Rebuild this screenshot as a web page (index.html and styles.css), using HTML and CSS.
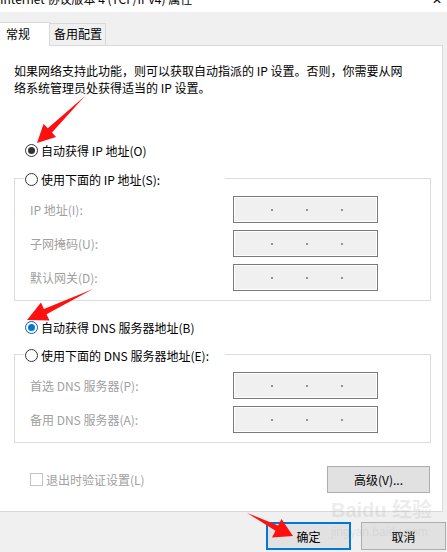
FILE: index.html
```html
<!DOCTYPE html>
<html lang="zh-CN">
<head>
<meta charset="utf-8">
<title>Internet 协议版本 4 (TCP/IPv4) 属性</title>
<link rel="stylesheet" href="styles.css">
</head>
<body>
<div class="titlebar">
  <span class="title-text">Internet 协议版本 4 (TCP/IPv4) 属性</span>
  <span class="title-close">✕</span>
</div>
<div class="tabstrip">
  <div class="tab tab-active">常规</div>
  <div class="tab">备用配置</div>
</div>
<div class="panel">
  <p class="desc">如果网络支持此功能，则可以获取自动指派的 IP 设置。否则，你需要从网<br>络系统管理员处获得适当的 IP 设置。</p>

  <div class="radio-row first"><span class="radio on"></span><span>自动获得 IP 地址(O)</span></div>

  <div class="group">
    <div class="legend radio-row"><span class="radio"></span><span>使用下面的 IP 地址(S):</span></div>
    <div class="fields">
      <span class="flabel">IP 地址(I):</span>
      <span class="ipbox"><i></i><i></i><i></i></span>
      <span class="flabel">子网掩码(U):</span>
      <span class="ipbox"><i></i><i></i><i></i></span>
      <span class="flabel">默认网关(D):</span>
      <span class="ipbox"><i></i><i></i><i></i></span>
    </div>
  </div>

  <div class="radio-row second"><span class="radio on blue"></span><span>自动获得 DNS 服务器地址(B)</span></div>

  <div class="group">
    <div class="legend radio-row"><span class="radio"></span><span>使用下面的 DNS 服务器地址(E):</span></div>
    <div class="fields">
      <span class="flabel">首选 DNS 服务器(P):</span>
      <span class="ipbox"><i></i><i></i><i></i></span>
      <span class="flabel">备用 DNS 服务器(A):</span>
      <span class="ipbox"><i></i><i></i><i></i></span>
    </div>
  </div>

  <div class="bottom-row">
    <span class="check-wrap"><span class="checkbox"></span><span class="flabel">退出时验证设置(L)</span></span>
    <span class="btn adv">高级(V)...</span>
  </div>
</div>
<div class="footer">
  <span class="btn ok">确定</span>
  <span class="btn cancel">取消</span>
</div>

<div class="watermark">
  <span class="wm-big">Baidu 经验</span>
  <span class="wm-small">jingyan.baidu.com</span>
</div>

<svg class="arrows" width="447" height="552" viewBox="0 0 447 552">
  <polygon points="85,96 52,132.5 56,137 37,143 43.5,124 47.8,128.3" />
  <polygon points="93,289 46.5,314.3 49.5,320.5 27,320 41,302.5 43.9,308.9" />
  <polygon points="247,513 275.5,530.8 272,537.5 293,536 281.5,519 278.1,525.4" />
</svg>
</body>
</html>
```
FILE: styles.css
```css
html, body {
  margin: 0;
  padding: 0;
}
body {
  width: 447px;
  height: 552px;
  overflow: hidden;
  position: relative;
  background: #f0f0f0;
  font-family: "Noto Sans CJK SC", "Noto Sans", sans-serif;
  font-size: 12px;
  color: #000;
}
.titlebar {
  height: 12px;
  background: #fff;
  overflow: hidden;
  display: flex;
  justify-content: space-between;
  align-items: flex-start;
}
.title-text {
  display: block;
  margin-top: -10px;
  line-height: 17px;
  font-size: 12px;
}
.title-close {
  display: block;
  margin-top: -10px;
  line-height: 17px;
  font-size: 12px;
  padding-right: 5px;
}
.tabstrip {
  height: 33px;
  display: flex;
  align-items: flex-end;
  position: relative;
  z-index: 2;
}
.tab {
  box-sizing: border-box;
  height: 22px;
  width: 56px;
  padding-left: 4px;
  line-height: 20px;
  background: #f0f0f0;
  border: 1px solid #d9d9d9;
  border-bottom: none;
}
.tab-active {
  width: 50px;
  height: 24px;
  padding-left: 6px;
  line-height: 22px;
  background: #fff;
  border-left: none;
  margin-bottom: -1px;
}
.tab-active + .tab {
  border-left: none;
}
.panel {
  box-sizing: border-box;
  width: 443px;
  height: 467px;
  background: #fff;
  border-top: 1px solid #d9d9d9;
  border-right: 1px solid #d9d9d9;
  border-bottom: 1px solid #d9d9d9;
  padding-top: 16px;
}
.desc {
  margin: 0;
  padding-left: 14px;
  line-height: 17px;
  white-space: nowrap;
}
.radio-row {
  display: flex;
  align-items: center;
  gap: 3px;
  height: 20px;
  padding-left: 25px;
  white-space: nowrap;
}
.radio-row.first {
  margin-top: 44px;
}
.radio-row.second {
  margin-top: 16px;
}
.radio {
  box-sizing: border-box;
  width: 13px;
  height: 13px;
  border: 1px solid #333;
  border-radius: 50%;
  background: #fff;
  display: flex;
  align-items: center;
  justify-content: center;
  flex: none;
}
.radio.on::after {
  content: "";
  width: 7px;
  height: 7px;
  border-radius: 50%;
  background: #333;
}
.radio.blue {
  border-color: #0a5aa8;
}
.radio.blue::after {
  background: #0078d7;
}
.group {
  box-sizing: border-box;
  margin: 18px 0 0 14px;
  width: 417px;
  border: 1px solid #dcdcdc;
}
.radio-row.second + .group {
  margin-top: 17px;
}
.legend {
  box-sizing: border-box;
  margin: -10px 0 0 9px;
  padding-left: 1px;
  width: 201px;
  background: #fff;
  overflow: hidden;
}
.fields {
  display: grid;
  grid-template-columns: 203px 145px;
  grid-auto-rows: 27px;
  row-gap: 7px;
  align-items: center;
  padding: 7px 0 9px 15px;
}
.flabel {
  color: #a0a0a0;
  white-space: nowrap;
}
.ipbox {
  box-sizing: border-box;
  height: 27px;
  border: 1px solid #7a7a7a;
  background: #f0f0f0;
  box-shadow: inset 0 0 0 1px #fff;
  display: flex;
  align-items: center;
  justify-content: center;
  gap: 33px;
  padding-left: 2px;
}
.ipbox i {
  display: block;
  width: 2px;
  height: 2px;
  background: #8a96a8;
}
.bottom-row {
  display: flex;
  align-items: center;
  justify-content: space-between;
  margin-top: 23px;
  padding: 0 12px 0 30px;
  height: 27px;
}
.check-wrap {
  display: flex;
  align-items: center;
  gap: 3px;
}
.checkbox {
  box-sizing: border-box;
  width: 13px;
  height: 13px;
  border: 1px solid #c4c4c4;
  background: #fff;
}
.btn {
  box-sizing: border-box;
  display: flex;
  align-items: center;
  justify-content: center;
  background: #e1e1e1;
  border: 1px solid #adadad;
  color: #000;
}
.adv {
  width: 103px;
  height: 27px;
}
.footer {
  display: flex;
  justify-content: flex-end;
  gap: 10px;
  padding: 10px 1px 0 0;
}
.ok, .cancel {
  width: 85px;
  height: 28px;
}
.ok {
  border: 2px solid #0078d7;
}
.watermark {
  position: absolute;
  left: 331px;
  top: 500px;
  display: flex;
  flex-direction: column;
  line-height: 1;
  pointer-events: none;
  color: rgba(170, 170, 170, 0.22);
  font-family: "Liberation Sans", "Noto Sans CJK SC", sans-serif;
}
.wm-big {
  font-size: 20px;
  font-weight: bold;
  white-space: nowrap;
}
.wm-small {
  font-size: 12px;
  margin-top: 6px;
}
.arrows {
  position: absolute;
  left: 0;
  top: 0;
  pointer-events: none;
}
.arrows polygon {
  fill: #ff1010;
}
```
